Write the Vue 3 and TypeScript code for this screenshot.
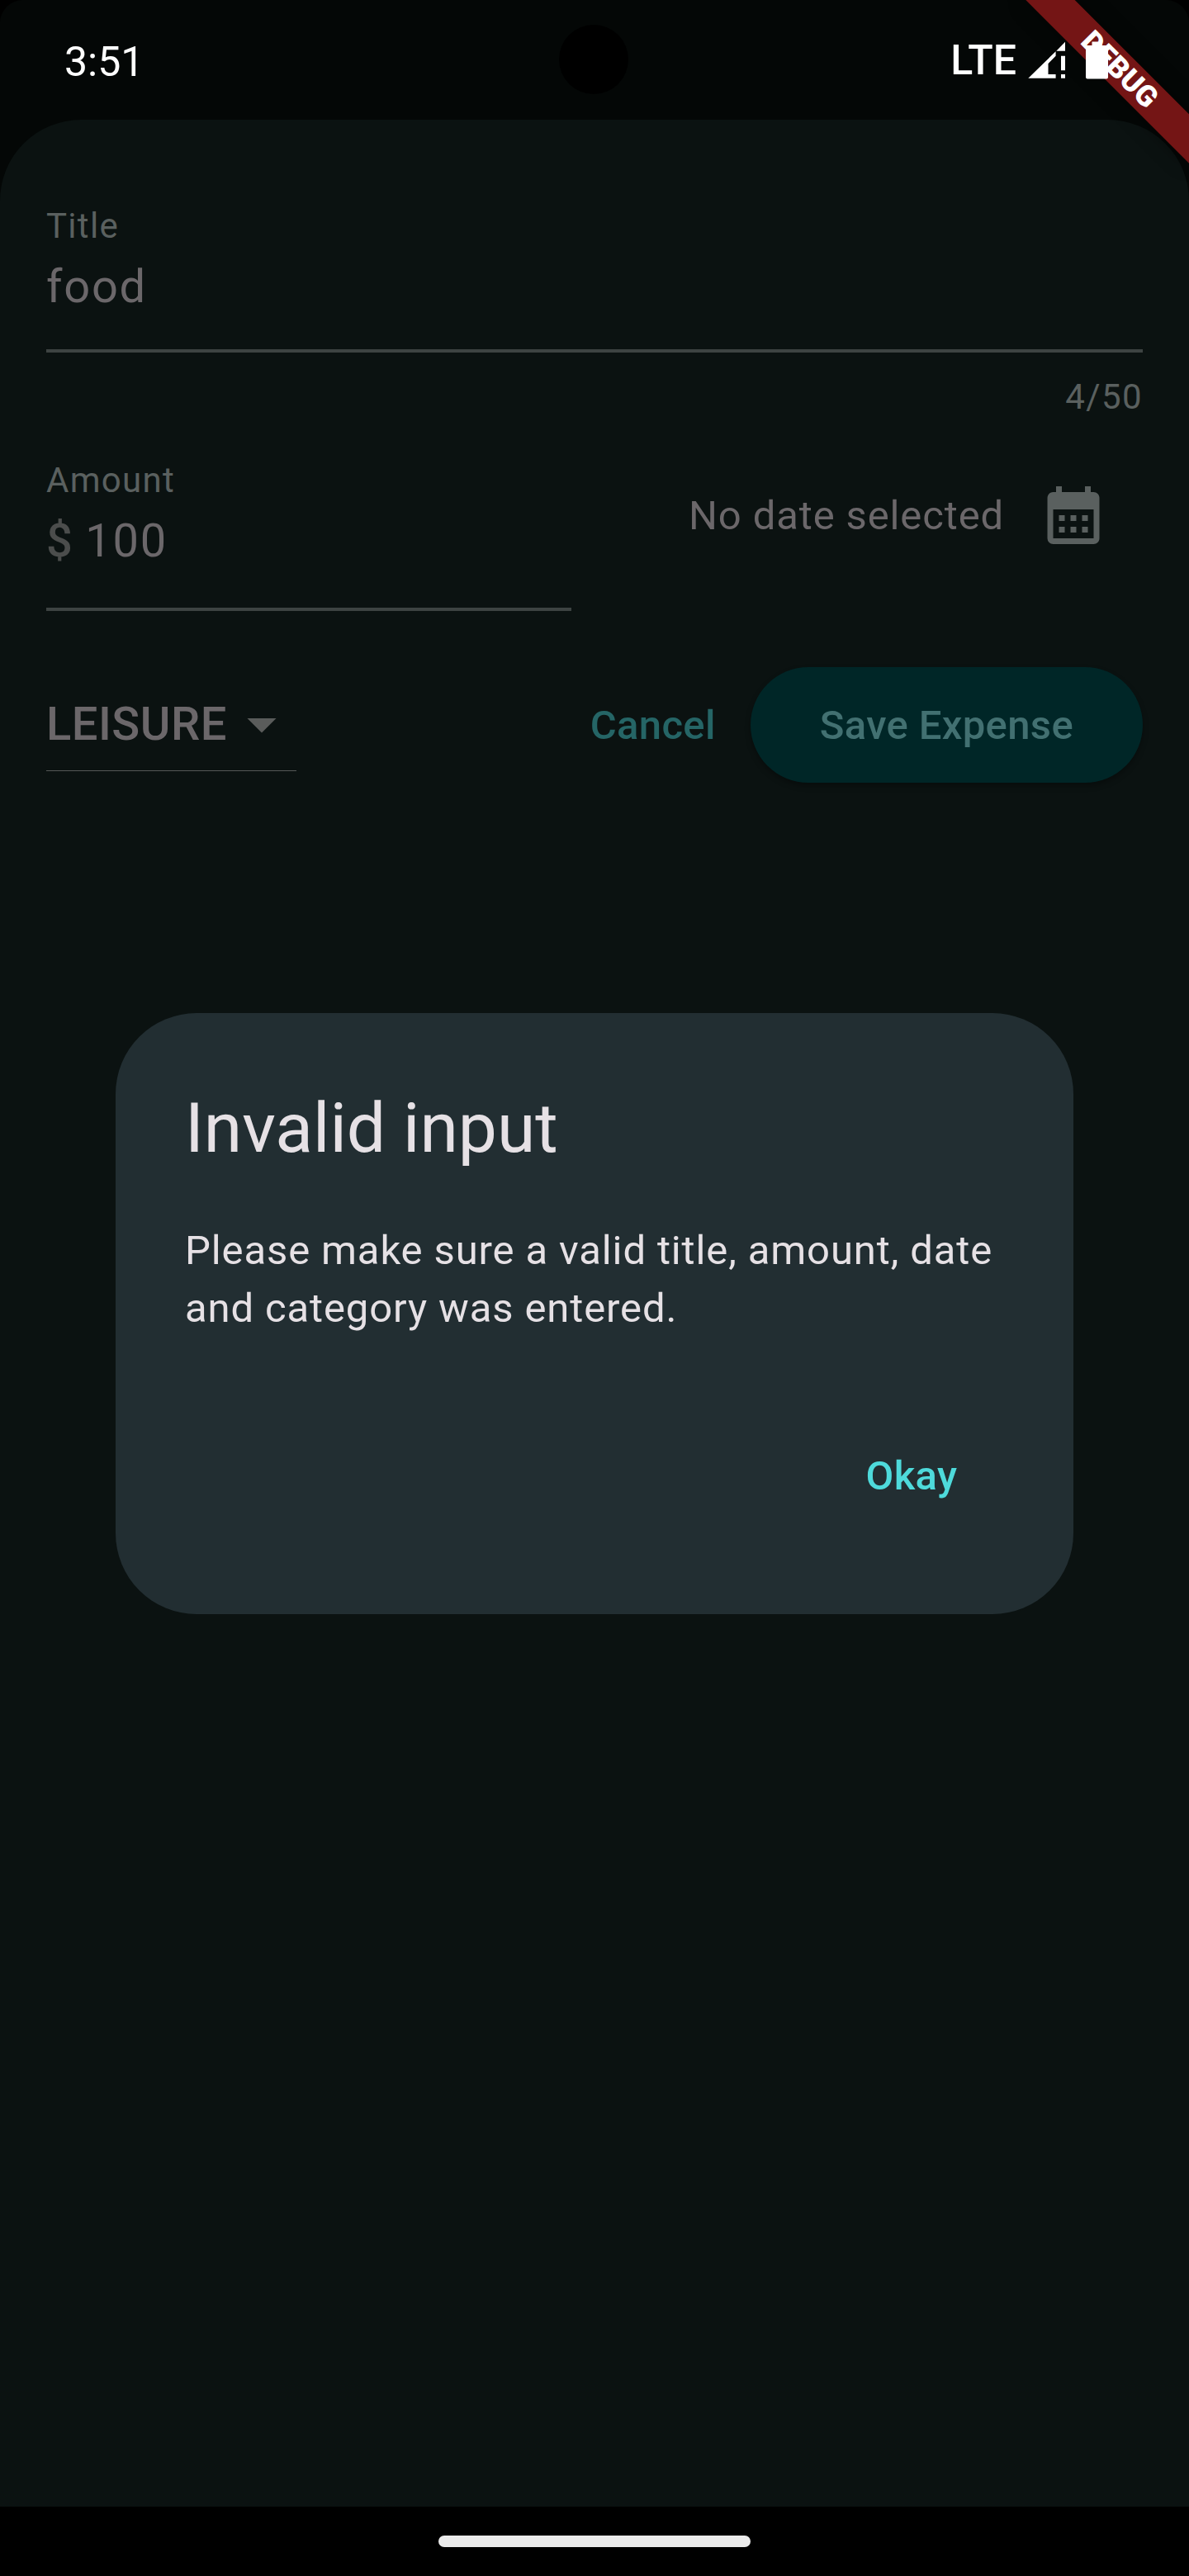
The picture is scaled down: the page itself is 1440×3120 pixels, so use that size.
<script setup lang="ts">
import { ref } from 'vue'

const title = ref('food')
const maxLength = 50
const amount = ref('100')
const category = ref('LEISURE')
</script>

<template>
  <div class="screen">
    <header class="status">
      <span class="clock">3:51</span>
      <span class="camera"></span>
      <div class="indicators">
        <span class="network">LTE</span>
        <svg class="signal" width="45" height="45" viewBox="0 0 45 45" fill="#fff">
          <path d="M0.3 44.7 L33.6 12.2 V17.8 L24.5 27 V40 H33.6 V44.7 Z" />
          <path d="M34.3 11.7 L45 0.8 V11.7 Z" />
          <path d="M40 17.8 H45 V35.3 H40 Z M40 40 H45 V44.7 H40 Z" />
        </svg>
        <svg class="battery" width="27" height="46" viewBox="0 0 27 46" fill="#fff">
          <path d="M7.5 0.5 H19.5 V5 H25 Q27 5 27 7 V43.5 Q27 45.5 25 45.5 H2 Q0 45.5 0 43.5 V7 Q0 5 2 5 H7.5 Z" />
        </svg>
      </div>
    </header>

    <main class="sheet">
      <div class="field">
        <label class="label">Title</label>
        <div class="value">{{ title }}</div>
      </div>
      <div class="counter">{{ title.length }}/{{ maxLength }}</div>

      <div class="row">
        <div class="field amount">
          <label class="label">Amount</label>
          <div class="value"><span class="prefix">$</span>{{ amount }}</div>
        </div>
        <div class="date">
          <span>No date selected</span>
          <button class="icon-button" aria-label="Pick date">
            <svg width="84" height="84" viewBox="0 0 24 24" fill="#5a605f">
              <path d="M19 4h-1V2h-2v2H8V2H6v2H5c-1.11 0-1.99.9-1.99 2L3 20a2 2 0 0 0 2 2h14c1.1 0 2-.9 2-2V6c0-1.1-.9-2-2-2zm0 16H5V10h14v10zM9 14H7v-2h2v2zm4 0h-2v-2h2v2zm4 0h-2v-2h2v2zm-8 4H7v-2h2v2zm4 0h-2v-2h2v2zm4 0h-2v-2h2v2z" />
            </svg>
          </button>
        </div>
      </div>

      <div class="actions">
        <div class="dropdown">
          <span>{{ category }}</span>
          <svg width="84" height="84" viewBox="0 0 24 24" fill="#5a5c5b"><path d="M7 10l5 5 5-5z" /></svg>
        </div>
        <div class="buttons">
          <button class="text-button">Cancel</button>
          <button class="save">Save Expense</button>
        </div>
      </div>

      <div class="overlay">
        <section class="dialog" role="alertdialog">
          <h1>Invalid input</h1>
          <p>Please make sure a valid title, amount, date and category was entered.</p>
          <footer><button class="okay">Okay</button></footer>
        </section>
      </div>
    </main>

    <nav class="navbar"><span class="handle"></span></nav>
    <div class="ribbon-clip"><div class="ribbon">DEBUG</div></div>
  </div>
</template>

<style>
body {
  margin: 0;
  background: #000;
}
</style>

<style scoped>
.screen {
  position: relative;
  display: flex;
  flex-direction: column;
  width: 1440px;
  height: 3120px;
  overflow: hidden;
  background: linear-gradient(#040706 0 300px, #000 300px);
  border-radius: 28px 28px 0 0;
  font-family: Roboto, "Noto Sans", sans-serif;
}
button {
  border: 0;
  padding: 0;
  background: none;
  font: inherit;
  letter-spacing: inherit;
  color: inherit;
}
.status {
  display: flex;
  justify-content: space-between;
  box-sizing: border-box;
  flex: none;
  height: 145px;
  padding: 0 98px 0 78px;
  color: #fff;
  font-size: 50px;
}
.clock {
  line-height: 58px;
  margin-top: 46px;
}
.camera {
  position: absolute;
  left: 677px;
  top: 30px;
  width: 84px;
  height: 84px;
  border-radius: 50%;
  background: #000;
}
.indicators {
  position: relative;
  z-index: 3;
  display: flex;
  align-items: flex-start;
}
.network {
  line-height: 58px;
  margin-top: 44px;
  font-weight: 500;
}
.signal {
  margin: 50px 0 0 14px;
}
.battery {
  margin: 50px 0 0 25px;
}
.sheet {
  position: relative;
  box-sizing: border-box;
  flex: none;
  height: 2891px;
  padding: 105px 56px 0;
  border-radius: 98px 98px 0 0;
  background: #0b1211;
  color: #6b676a;
}
.field {
  border-bottom: 4px solid #3d4342;
  padding-bottom: 34px;
}
.label {
  display: block;
  font-size: 42px;
  line-height: 48px;
  letter-spacing: 1.3px;
  color: #5a605f;
}
.value {
  margin-top: 7px;
  font-size: 56px;
  line-height: 84px;
  letter-spacing: 1.75px;
}
.counter {
  margin-top: 26px;
  font-size: 42px;
  line-height: 56px;
  letter-spacing: 1.4px;
  text-align: right;
  color: #5a605f;
}
.row {
  display: flex;
  justify-content: space-between;
  margin-top: 49px;
}
.amount {
  width: 636px;
  padding-bottom: 39px;
}
.prefix {
  margin-right: 15px;
  font-weight: 500;
  letter-spacing: 0.5px;
  color: #4b4d4c;
}
.date {
  display: flex;
  align-items: center;
  height: 168px;
  margin-top: -18px;
  font-size: 49px;
  letter-spacing: 0.875px;
}
.icon-button {
  display: flex;
  align-items: center;
  justify-content: center;
  width: 168px;
  height: 168px;
}
.actions {
  display: flex;
  justify-content: space-between;
  margin-top: 68px;
}
.dropdown {
  display: flex;
  height: 98px;
  margin-top: 27px;
  border-bottom: 1px solid #555857;
  font-size: 56px;
  font-weight: 500;
  line-height: 84px;
  letter-spacing: 0.525px;
}
.buttons {
  display: flex;
  font-size: 49px;
  font-weight: 500;
  letter-spacing: 0.35px;
}
.text-button {
  padding: 0 42px;
  color: #256566;
}
.save {
  height: 140px;
  padding: 0 84px;
  border-radius: 70px;
  background: #002627;
  color: #427071;
  box-shadow: 0 4px 7px rgba(0, 0, 0, 0.3);
}
.overlay {
  position: absolute;
  inset: 0;
  display: flex;
  align-items: center;
  justify-content: center;
}
.dialog {
  box-sizing: border-box;
  width: 1160px;
  padding: 84px;
  border-radius: 98px;
  background: #222e32;
  color: #e6e1e5;
}
.dialog h1 {
  margin: 0 0 57px;
  font-size: 84px;
  font-weight: 400;
  line-height: 112px;
}
.dialog p {
  margin: 0 0 83px;
  font-size: 49px;
  line-height: 70px;
  letter-spacing: 0.875px;
}
.dialog footer {
  display: flex;
  justify-content: flex-end;
}
.okay {
  box-sizing: border-box;
  width: 224px;
  height: 168px;
  padding-top: 2px;
  color: #4edadb;
  font-size: 49px;
  font-weight: 500;
  letter-spacing: 0.35px;
}
.navbar {
  display: flex;
  justify-content: center;
  flex: 1;
  background: #000;
}
.handle {
  width: 378px;
  height: 14px;
  margin-top: 35px;
  border-radius: 7px;
  background: #ebebeb;
}
.ribbon-clip {
  position: absolute;
  z-index: 2;
  top: 0;
  right: 0;
  width: 260px;
  height: 260px;
  overflow: hidden;
}
.ribbon {
  position: absolute;
  left: 36px;
  top: 63px;
  width: 280px;
  height: 42px;
  transform: rotate(45deg);
  background: #741515;
  box-shadow: 0 0 21px rgba(0, 0, 0, 0.5);
  color: #fff;
  font-size: 35.7px;
  font-weight: 900;
  line-height: 42px;
  text-align: center;
}
</style>
